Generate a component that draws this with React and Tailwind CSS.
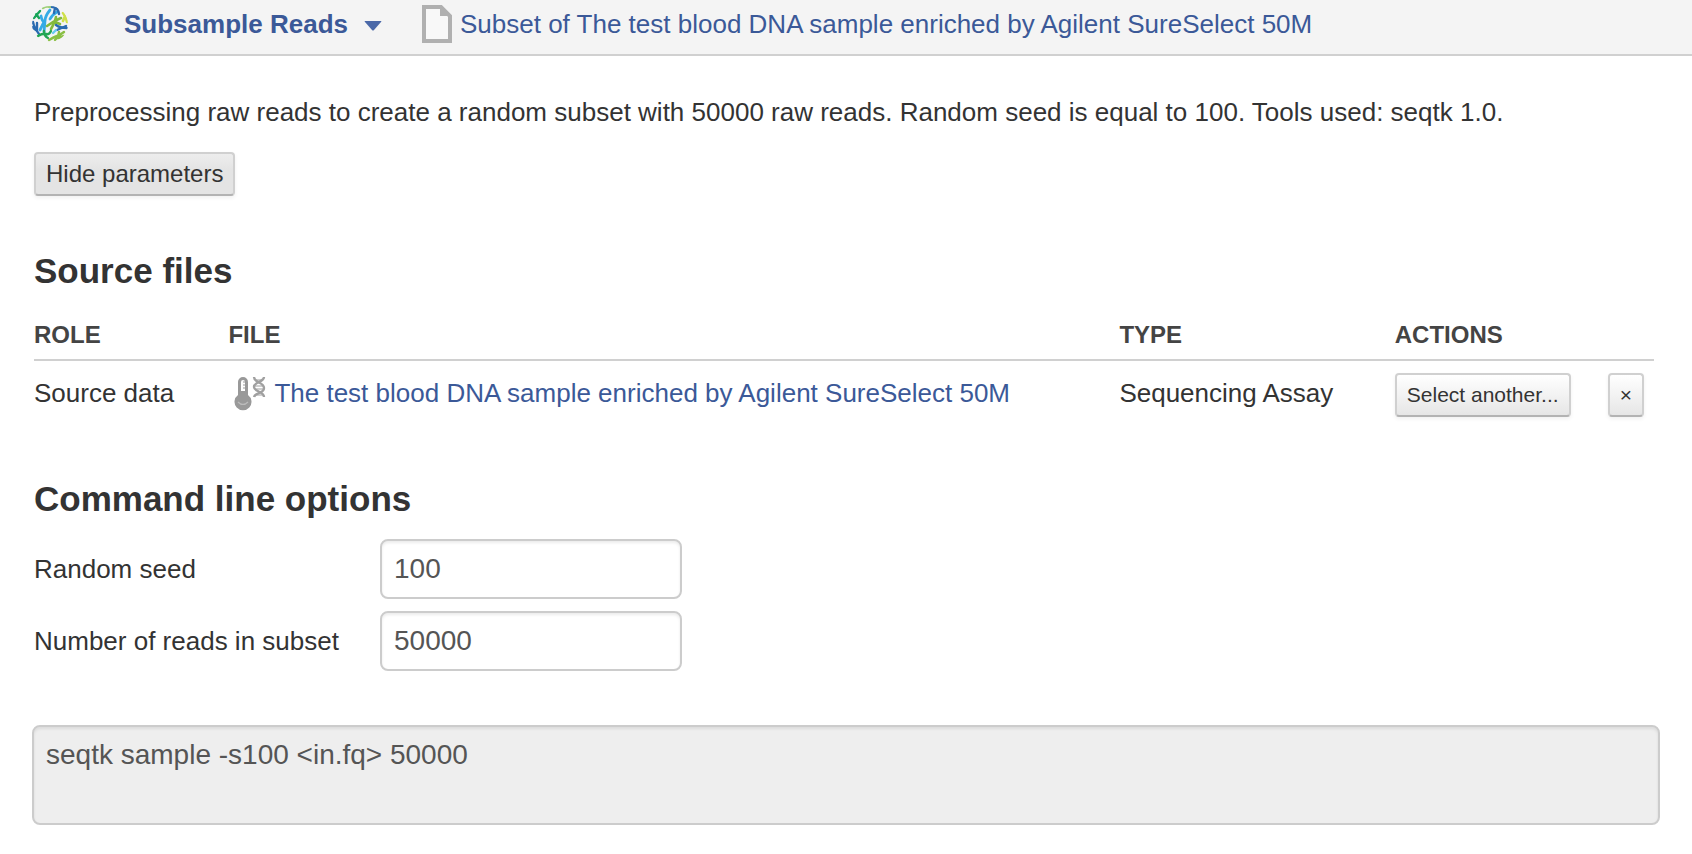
import React, { useState } from 'react';

function GenomeLogo() {
  return (
    <svg viewBox="0 0 36 36" className="size-9 shrink-0" fill="none" strokeLinecap="round" aria-hidden="true">
      <clipPath id="globe">
        <circle cx="18" cy="18" r="18" />
      </clipPath>
      <g clipPath="url(#globe)" strokeWidth="2.4">
        <path d="M2 12 8 5M4 8l3 4" stroke="#18a558" />
        <path d="M11 2q3-2 7-1" stroke="#9fd07a" />
        <path d="M18 4q-5 6-5 11l-1 11M9 10q1 5 3 6l-4 8M25 6q-4 2-7 7" stroke="#35abe6" strokeWidth="2.8" />
        <path d="M20 1q6 0 7 7M22 7l1-5" stroke="#2a6bb0" />
        <path d="M31 7q3 4 4 9M31 15l2-5" stroke="#cfe04a" strokeWidth="2.6" />
        <path d="M29 12q-5 2-8 4t-6 4M24 11q-1 5-5 12M23 16l5 2" stroke="#83b93c" strokeWidth="2.6" />
        <path d="M24 19q4 3 11 3M25 24l9-4" stroke="#2a6bb0" />
        <path d="M1 16q1 6 6 12M5 17v8M0 21l4 3" stroke="#2a6bb0" />
        <path d="M6 30q5-3 8-2t5-3M12 25q0 5 4 7" stroke="#22a552" />
        <path d="M21 27l3-3" stroke="#68c9f0" />
        <path d="M32 26q-4 3-7 4t-8 4M27 26q0 4-4 8M32 30l-6 2" stroke="#8abf43" />
      </g>
    </svg>
  );
}

function DocumentIcon() {
  return (
    <svg viewBox="0 0 30 38" className="h-[38px] w-[30px] shrink-0" aria-hidden="true">
      <path d="M2 2h17l9 9v25H2z" fill="#f8f8f8" stroke="#b0b0b0" strokeWidth="4" />
      <path d="M18 1v10h11z" fill="#b0b0b0" />
    </svg>
  );
}

function AssayIcon() {
  return (
    <svg viewBox="0 0 32 34" className="h-[34px] w-8 shrink-0" aria-hidden="true">
      <path d="M4 5a5 5 0 0 1 10 0v13a8.5 8.5 0 1 1-10 0z" fill="#999" />
      <path d="M7 5a2 2 0 0 1 4 0v9H7z" fill="#fff" />
      <path d="M9 5h3M9 8h3M9 11h3" stroke="#999" strokeWidth="1.2" />
      <path d="M4 25q5 5 10 0" fill="none" stroke="#bbb" strokeWidth="1.2" />
      <g fill="none" stroke="#a0a0a0" strokeWidth="2.4">
        <path d="M20 0c0 6 10 5 10 11s-9 4-10 9" />
        <path d="M30 0c0 5-10 5-10 10s10 4 10 10" />
        <path d="M21 3h8M21 9h8M21 12h8M21 18h8" strokeWidth="1.2" />
      </g>
    </svg>
  );
}

const buttonBase =
  'h-11 whitespace-nowrap rounded-sm border-2 border-[#d0d0d0] border-b-[#b3b3b3] text-[#333] shadow-[0_2px_4px_rgba(0,0,0,0.06)]';
const inputBase =
  'rounded-lg border-2 border-[#ccc] px-3 text-[28px] text-[#555] shadow-[inset_0_2px_3px_rgba(0,0,0,0.08)]';

function Field({ id, label, value, onChange }) {
  return (
    <div className="flex items-center">
      <label htmlFor={id} className="w-[346px] shrink-0">{label}</label>
      <input id={id} type="text" value={value} onChange={(e) => onChange(e.target.value)} className={`${inputBase} h-[60px] w-[302px] bg-white`} />
    </div>
  );
}

export default function App() {
  const [seed, setSeed] = useState('100');
  const [reads, setReads] = useState('50000');
  const [open, setOpen] = useState(true);

  return (
    <div className="min-h-screen bg-white font-['Liberation_Sans',Arial,sans-serif] text-[26px] leading-8 text-[#333]">
      <header className="flex h-14 items-center border-b-2 border-[#d0d0d0] bg-[#f4f4f4] pb-1.5 pl-8 text-[#3b5998]">
        <GenomeLogo />
        <button type="button" className="ml-14 flex items-center gap-4 whitespace-nowrap font-bold">
          Subsample Reads
          <svg viewBox="0 0 18 10" className="mt-1 h-[10px] w-[18px]" fill="#4a68a8" aria-hidden="true">
            <path d="M1 0h16q1 0 0 1l-7 8q-1 1-2 0L1 1q-1-1 0-1z" />
          </svg>
        </button>
        <a href="#file" className="ml-10 flex items-center gap-2 whitespace-nowrap">
          <DocumentIcon />
          Subset of The test blood DNA sample enriched by Agilent SureSelect 50M
        </a>
      </header>

      <main className="px-8 pt-10">
        <div className="px-[2px]">
          <p>Preprocessing raw reads to create a random subset with 50000 raw reads. Random seed is equal to 100. Tools used: seqtk 1.0.</p>
          <button type="button" onClick={() => setOpen(!open)} className={`${buttonBase} mt-6 block bg-linear-to-b from-[#ededed] to-[#e4e4e4] to-40% px-[10px] text-2xl`}>
            {open ? 'Hide parameters' : 'Show parameters'}
          </button>
        </div>

        {open && (
          <>
            <section className="mt-[55px] pl-[2px] pr-[6px]">
              <h2 className="text-[35px] font-bold leading-10">Source files</h2>
              <table className="mt-7 w-full table-fixed text-left">
                <colgroup>
                  <col className="w-[12%]" />
                  <col className="w-[55%]" />
                  <col className="w-[17%]" />
                  <col />
                </colgroup>
                <thead className="border-b-2 border-[#d0d0d0] text-2xl text-[#444]">
                  <tr>
                    <th className="pb-2">ROLE</th>
                    <th className="pb-2">FILE</th>
                    <th className="pb-2">TYPE</th>
                    <th className="pb-2">ACTIONS</th>
                  </tr>
                </thead>
                <tbody>
                  <tr className="align-top">
                    <td className="pt-4">Source data</td>
                    <td className="pt-4">
                      <a href="#source" className="flex items-start gap-2 whitespace-nowrap pl-[6px] text-[#3b5998]">
                        <AssayIcon />
                        The test blood DNA sample enriched by Agilent SureSelect 50M
                      </a>
                    </td>
                    <td className="whitespace-nowrap pt-4">Sequencing Assay</td>
                    <td className="pr-[10px] pt-3">
                      <div className="flex justify-between">
                        <button type="button" className={`${buttonBase} bg-linear-to-b from-white to-[#e6e6e6] px-[10px] text-[21px]`}>Select another...</button>
                        <button type="button" aria-label="Remove" className={`${buttonBase} w-9 bg-linear-to-b from-white to-[#e6e6e6] text-[21px]`}>×</button>
                      </div>
                    </td>
                  </tr>
                </tbody>
              </table>
            </section>

            <section className="mt-[62px] px-[2px]">
              <h2 className="text-[35px] font-bold leading-10">Command line options</h2>
              <div className="mt-5 flex flex-col gap-3">
                <Field id="seed" label="Random seed" value={seed} onChange={setSeed} />
                <Field id="reads" label="Number of reads in subset" value={reads} onChange={setReads} />
              </div>
            </section>

            <textarea
              readOnly
              aria-label="Command"
              value={`seqtk sample -s${seed} <in.fq> ${reads}`}
              className={`${inputBase} mt-[54px] block h-[100px] w-full resize-none bg-[#eee] py-3`}
            />
          </>
        )}
      </main>
    </div>
  );
}
